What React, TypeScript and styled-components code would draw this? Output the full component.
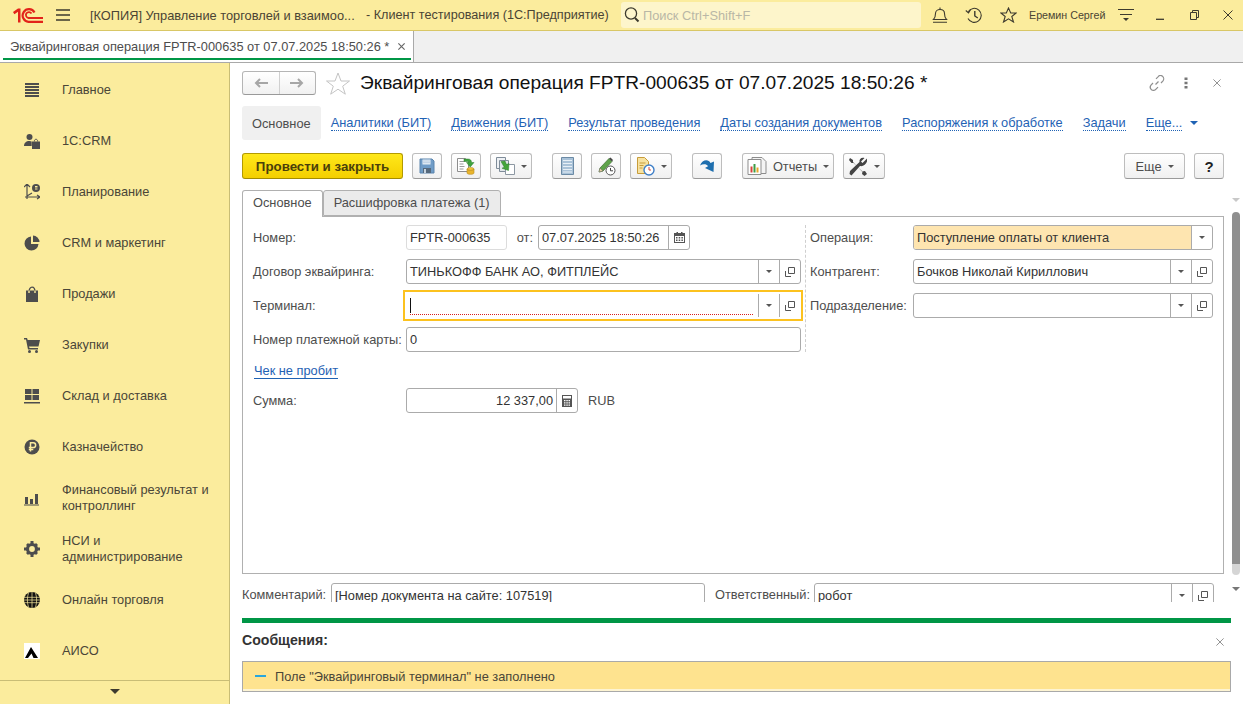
import React from "react";
import styled, { createGlobalStyle } from "styled-components";

const Global = createGlobalStyle`
  html, body { margin: 0; padding: 0; background: #fff; overflow: hidden; }
  body { font-family: "Liberation Sans", Arial, sans-serif; font-size: 12.8px; color: #333; }
  * { box-sizing: border-box; }
  svg { display: block; flex: none; }
`;

const Page = styled.div`
  width: 1243px;
  height: 704px;
  display: flex;
  flex-direction: column;
  overflow: hidden;
`;

/* ---------- top bar ---------- */
const TopBar = styled.header`
  height: 31px;
  flex: none;
  display: flex;
  align-items: center;
  background: #fbec9d;
  border-bottom: 1px solid #d9c766;
  padding-left: 13px;
`;
const WinTitle = styled.span<{ $w: number; $size?: number }>`
  width: ${(p) => p.$w}px;
  flex: none;
  font-size: ${(p) => p.$size ?? 12.8}px;
  color: #4a4434;
  white-space: nowrap;
  overflow: hidden;
`;
const Search = styled.div`
  width: 300px;
  height: 26px;
  flex: none;
  margin-left: 10px;
  background: #fdf5cb;
  border-radius: 3px;
  display: flex;
  align-items: center;
  padding-left: 3px;
  gap: 3px;
  color: #b9b7a6;
`;
const TopIcon = styled.span<{ $w: number }>`
  width: ${(p) => p.$w}px;
  flex: none;
  display: flex;
  justify-content: center;
`;
const UserName = styled.span`
  width: 86px;
  flex: none;
  font-size: 10.7px;
  color: #4a4434;
  white-space: nowrap;
  padding-left: 1px;
`;

/* ---------- open windows strip ---------- */
const Strip = styled.div`
  height: 32px;
  flex: none;
  background: #f0f0f0;
  border-bottom: 1px solid #a9a9a9;
  display: flex;
`;
const StripTab = styled.div`
  width: 414px;
  height: 31px;
  background: #fff;
  border-right: 1px solid #a9a9a9;
  padding: 0 3px 0 10px;
  display: flex;
  align-items: center;
  justify-content: space-between;
  color: #4d4d4d;
  position: relative;
  white-space: nowrap;
`;
const StripUnderline = styled.span`
  position: absolute;
  left: 3px;
  right: 2px;
  bottom: 2px;
  height: 2px;
  background: #009646;
`;
const StripClose = styled.span`
  margin-right: 5px;
  margin-top: -1px;
`;

/* ---------- body ---------- */
const Body = styled.div`
  flex: 1;
  min-height: 0;
  display: flex;
`;
const Sidebar = styled.nav`
  width: 230px;
  flex: none;
  background: #fbec9d;
  border-right: 1px solid #c9bd76;
  display: flex;
  flex-direction: column;
  padding-top: 1px;
`;
const SideList = styled.div`
  height: 616px;
  flex: none;
`;
const SideItem = styled.div`
  height: 51px;
  display: flex;
  align-items: center;
  padding-left: 24px;
  padding-right: 14px;
  gap: 22px;
  color: #4a4638;
  line-height: 16px;
`;
const SideFoot = styled.div`
  flex: 1;
  border-top: 1px solid #c9bd76;
  display: flex;
  justify-content: center;
  padding-top: 8px;
`;
const Main = styled.main`
  flex: 1;
  min-width: 0;
  display: flex;
  flex-direction: column;
  background: #fff;
`;
const FormArea = styled.div`
  height: 555px;
  flex: none;
  position: relative;
  overflow: hidden;
  padding: 8px 19px 0 12px;
`;
const HeadRow = styled.div`
  height: 24px;
  display: flex;
  align-items: center;
`;
const NavPair = styled.div`
  width: 74px;
  height: 24px;
  flex: none;
  display: flex;
  border: 1px solid #b5b5b5;
  border-bottom-color: #999;
  border-radius: 3px;
  background: linear-gradient(#fff, #f1f1f1);
`;
const NavCell = styled.span<{ $line?: boolean }>`
  flex: 1;
  display: flex;
  align-items: center;
  justify-content: center;
  border-left: ${(p) => (p.$line ? "1px solid #d0d0d0" : "none")};
`;
const StarBox = styled.span`
  width: 44px;
  flex: none;
  display: flex;
  justify-content: center;
`;
const Title = styled.h1`
  margin: 0;
  font-size: 19.15px;
  font-weight: 400;
  color: #111;
  white-space: nowrap;
  flex: 1;
`;
const HeadActions = styled.div`
  display: flex;
  align-items: center;
  gap: 19px;
  padding-right: 3px;
`;
const HeadClose = styled.span`
  margin-left: 6px;
`;
const SectionNav = styled.div`
  height: 34px;
  margin-top: 11px;
  display: flex;
  align-items: center;
  gap: 20px;
`;
const SectionCurrent = styled.span`
  height: 34px;
  padding: 0 10px;
  margin-right: -10px;
  display: flex;
  align-items: center;
  background: #f0f0f0;
  border-radius: 3px;
  color: #4d4d4d;
`;
const SectionLink = styled.span`
  color: #1f62b4;
  line-height: 14px;
  border-bottom: 1px dotted #1f62b4;
  white-space: nowrap;
`;
const MoreLink = styled.span`
  display: flex;
  align-items: center;
  gap: 8px;
`;
const CmdBar = styled.div`
  height: 27px;
  margin-top: 13px;
  display: flex;
  gap: 20px;
`;
const CmdGroup = styled.div<{ $end?: boolean }>`
  display: flex;
  gap: 9px;
  margin-left: ${(p) => (p.$end ? "auto" : "0")};
`;
const PrimaryBtn = styled.button`
  width: 161px;
  height: 26px;
  padding: 0;
  border: 1px solid #b39a00;
  border-bottom-color: #a38c00;
  border-radius: 3px;
  background: linear-gradient(#ffe81a, #f4cf00);
  font: bold 13.3px "Liberation Sans", Arial, sans-serif;
  color: #4a3f0a;
`;
const CmdBtn = styled.button<{ $w: number }>`
  width: ${(p) => p.$w}px;
  height: 26px;
  padding: 0;
  border: 1px solid #bdbdbd;
  border-bottom-color: #9a9a9a;
  border-radius: 3px;
  background: linear-gradient(#fff, #f0f0f0);
  display: flex;
  align-items: center;
  justify-content: center;
  gap: 6px;
  font: 12.8px "Liberation Sans", Arial, sans-serif;
  color: #4d4d4d;
`;
const Help = styled.span`
  font-size: 15px;
  font-weight: 700;
  color: #222;
`;
const TabRow = styled.div`
  height: 26px;
  margin-top: 10px;
  display: flex;
  align-items: flex-end;
  position: relative;
  z-index: 1;
`;
const Tab = styled.div<{ $active?: boolean }>`
  height: ${(p) => (p.$active ? "27px" : "26px")};
  margin-bottom: ${(p) => (p.$active ? "-1px" : "0")};
  padding: 0 10px ${(p) => (p.$active ? "3px" : "2px")};
  display: flex;
  align-items: center;
  background: ${(p) => (p.$active ? "#fff" : "#ebebeb")};
  border: 1px solid #b0b0b0;
  border-bottom: ${(p) => (p.$active ? "none" : "1px solid #b0b0b0")};
  border-radius: 3px 3px 0 0;
  color: #4d4d4d;
  white-space: nowrap;
`;
const Panel = styled.section`
  height: 358px;
  border: 1px solid #b0b0b0;
  padding: 8px 10px 0;
`;
const Columns = styled.div`
  display: flex;
`;
const LeftCol = styled.div`
  width: 553px;
  flex: none;
  border-right: 1px dashed #cfcfcf;
  padding-right: 4px;
  display: flex;
  flex-direction: column;
  gap: 9px;
`;
const RightCol = styled.div`
  flex: 1;
  padding-left: 4px;
  display: flex;
  flex-direction: column;
  gap: 9px;
`;
const Row = styled.div`
  height: 25px;
  display: flex;
  align-items: center;
`;
const Label = styled.label<{ $w: number }>`
  width: ${(p) => p.$w}px;
  flex: none;
  color: #4d4d4d;
  white-space: nowrap;
`;
const Field = styled.div<{ $w?: number; $light?: boolean; $focus?: boolean }>`
  ${(p) => (p.$w ? `width: ${p.$w}px; flex: none;` : "flex: 1; min-width: 0;")}
  height: 25px;
  display: flex;
  align-items: stretch;
  background: #fff;
  border: 1px solid ${(p) => (p.$light ? "#dcdcdc" : p.$focus ? "transparent" : "#ababab")};
  border-radius: 3px;
  position: relative;
`;
const FocusRing = styled.span`
  position: absolute;
  inset: -4px -3px -4px -4px;
  border: 2px solid #fcc21f;
  pointer-events: none;
`;
const FieldText = styled.span<{ $bg?: string; $right?: boolean }>`
  flex: 1;
  min-width: 0;
  padding: 0 3px;
  display: flex;
  align-items: center;
  justify-content: ${(p) => (p.$right ? "flex-end" : "flex-start")};
  color: #333;
  white-space: nowrap;
  background: ${(p) => p.$bg ?? "transparent"};
  border-radius: 2px 0 0 2px;
`;
const FieldBtn = styled.span<{ $w?: number }>`
  width: ${(p) => p.$w ?? 21}px;
  flex: none;
  border-left: 1px solid #ababab;
  display: flex;
  align-items: center;
  justify-content: center;
`;
const Caret = styled.span`
  width: 1px;
  height: 15px;
  background: #111;
`;
const RedLine = styled.span`
  position: absolute;
  left: 3px;
  right: 47px;
  bottom: 2px;
  border-bottom: 1px dotted #d8201c;
`;
const Between = styled.span`
  width: 31px;
  flex: none;
  text-align: right;
  padding-right: 5px;
  color: #4d4d4d;
`;
const CheckLink = styled.div`
  height: 18px;
  margin-top: 10px;
  padding-left: 1px;
  display: flex;
  align-items: center;
`;
const SolidLink = styled.span`
  color: #1f62b4;
  line-height: 14px;
  border-bottom: 1px solid #1f62b4;
`;
const SumRow = styled(Row)`
  margin-top: 8px;
`;
const Unit = styled.span`
  margin-left: 10px;
  color: #4d4d4d;
`;
const CutRow = styled.div`
  height: 19px;
  margin-top: 9px;
  display: flex;
  overflow: hidden;
  align-items: flex-start;
`;
const CutLabel = styled.span<{ $w: number; $ml?: number }>`
  width: ${(p) => p.$w}px;
  margin-left: ${(p) => p.$ml ?? 0}px;
  flex: none;
  line-height: 24px;
  color: #4d4d4d;
  white-space: nowrap;
`;
const ScrollTrack = styled.div`
  position: absolute;
  right: 3px;
  top: 135px;
  width: 9px;
  height: 397px;
  display: flex;
  flex-direction: column;
  align-items: center;
`;
const ScrollThumb = styled.div`
  width: 8px;
  height: 363px;
  margin-top: 10px;
  border-radius: 4px;
  background: linear-gradient(#8f8f8f 0 97%, #d5d5d5 97%);
`;
const ScrollArrows = styled.div`
  margin-top: 12px;
`;
const Messages = styled.section`
  flex: 1;
  padding: 0 12px;
  display: flex;
  flex-direction: column;
`;
const GreenBar = styled.div`
  height: 5px;
  flex: none;
  background: #009646;
`;
const MsgHead = styled.div`
  height: 38px;
  flex: none;
  display: flex;
  align-items: center;
  justify-content: space-between;
  padding-right: 7px;
`;
const MsgTitle = styled.h2`
  margin: 0;
  font-size: 14.1px;
  font-weight: 700;
  color: #333;
  position: relative;
  top: -2px;
`;
const MsgBox = styled.div`
  height: 31px;
  flex: none;
  border: 1px solid #a9a9a9;
  background: #fee38f;
  box-shadow: inset 0 -2px 0 #fdf4d3;
  display: flex;
  align-items: center;
  gap: 9px;
  padding-left: 12px;
  color: #4a4638;
  padding-bottom: 1px;
`;
const Dash = styled.span`
  width: 11px;
  height: 2px;
  background: #29a6dd;
`;

/* ---------- drawings ---------- */
const Dark = "#4d4d4d";

const Logo = () => (
  <svg width="30" height="15" viewBox="0 0 30 15" fill="none" stroke="#e2231a">
    <path d="M0 4 5 .5H7.500V14.500H5V3.800L1.400 6.300z" fill="#e2231a" stroke="none" />
    <path d="M21.500 4.500A6.300 6.300 0 1 0 15.500 13.800H30" strokeWidth="2.200" />
    <path d="M18.500 5.500A3 3 0 1 0 15.500 10H30" strokeWidth="1.800" />
  </svg>
);
const Burger = () => (
  <svg width="14" height="12" viewBox="0 0 14 12" stroke="#3d3a2e" strokeWidth="1.300">
    <path d="M0 1h14M0 6h14M0 11h14" />
  </svg>
);
const SearchIcon = () => (
  <svg width="16" height="18" viewBox="0 0 16 18" fill="none" stroke="#3d3a2e" strokeWidth="1.300">
    <circle cx="7" cy="7.500" r="5.600" />
    <path d="M11 12l3.500 3.500" strokeWidth="2" />
  </svg>
);
const Bell = () => (
  <svg width="16" height="17" viewBox="0 0 16 17" fill="none" stroke="#3d3a2e" strokeWidth="1.100">
    <path d="M1.500 12.500c2-2 2-3.500 2-6 0-2.500 2-4 4.500-4s4.500 1.500 4.500 4c0 2.500 0 4 2 6z" />
    <path d="M8 .5v2M1 15.300h14" />
  </svg>
);
const History = () => (
  <svg width="18" height="17" viewBox="0 0 18 17" fill="none" stroke="#3d3a2e" strokeWidth="1.100">
    <path d="M3.200 4.800A7 7 0 1 1 3 11.500" />
    <path d="M.8 3.500 3.500 6 5.500 2.800" />
    <path d="M9.800 4v5l3 2" strokeWidth="1.400" />
  </svg>
);
const TopStar = () => (
  <svg width="17" height="16" viewBox="0 0 17 16" fill="none" stroke="#3d3a2e" strokeWidth="1.100">
    <path d="M8.500 1l2.200 5h5.500l-4.400 3.500 1.700 5.500-5-3.200-5 3.200 1.700-5.500L.8 6h5.500z" />
  </svg>
);
const UserMenu = () => (
  <svg width="16" height="14" viewBox="0 0 16 14" fill="#3d3a2e">
    <path d="M0 1h16v1H0zM2 6h12v1H2z" />
    <path d="M5 10h6l-3 3z" />
  </svg>
);
const Minimize = () => (
  <svg width="10" height="10" viewBox="0 0 10 10" stroke="#3d3a2e" strokeWidth="1.300">
    <path d="M1 9.300h8" />
  </svg>
);
const Restore = () => (
  <svg width="9" height="10" viewBox="0 0 9 10" fill="none" stroke="#3d3a2e">
    <path d="M.5 2.500h6v7h-6zM2.500 2.500v-2h6v7h-2" />
  </svg>
);
const Cross = ({ s = 10, c = "#3d3a2e", w = 1 }: { s?: number; c?: string; w?: number }) => (
  <svg width={s} height={s} viewBox="0 0 10 10" stroke={c} strokeWidth={w}>
    <path d="M.5.500l9 9M9.500.500l-9 9" />
  </svg>
);
const Side = ({ children }: { children: React.ReactNode }) => (
  <svg width="16" height="16" viewBox="0 0 16 16" fill={Dark}>
    {children}
  </svg>
);
const sideIcons: React.ReactNode[] = [
  <Side key="0"><path d="M1 1h14v2H1zM1 4h14v2H1zM1 7h14v2H1zM1 10h14v2H1zM1 13h14v2H1z" /></Side>,
  <Side key="1">
    <circle cx="5.500" cy="4" r="3" />
    <path d="M0 13c0-3 2-5 5.500-5 1 0 1.500.2 2.200.5V13z" />
    <path d="M8 8.500h8V16H8z" />
    <path d="M10.300 8.500c0-3 3.400-3 3.400 0" fill="none" stroke={Dark} />
  </Side>,
  <Side key="2">
    <circle cx="12" cy="4" r="4" />
    <path d="M3 1v14M0 3l3-3 3 3M1 13h15M13 11l3 2-3 2M3 12l5-3" fill="none" stroke={Dark} strokeWidth="1.200" />
    <path d="M11 2h2.500v1.500H11zM11 4.500h2.500V5.500H11z" fill="#fbec9d" />
  </Side>,
  <Side key="3">
    <path d="M7 1.500A7 7 0 1 0 14.500 9H7z" />
    <path d="M9 .5A7 7 0 0 1 15.500 7H9z" />
  </Side>,
  <Side key="4">
    <path d="M2 4.500h12V16H2z" />
    <path d="M5 6c0-6.500 6-6.500 6 0" fill="none" stroke={Dark} strokeWidth="1.300" />
    <path d="M4.300 4.500h1.400V7H4.300zM10.300 4.500h1.400V7h-1.400z" fill="#fbec9d" />
  </Side>,
  <Side key="5">
    <path d="M0 1h3l.7 2H16l-1.500 6.500H5L5.500 11H14v1.500H4L2 2.500H0z" />
    <circle cx="5.500" cy="14.500" r="1.500" />
    <circle cx="12.500" cy="14.500" r="1.500" />
  </Side>,
  <Side key="6">
    <path d="M1 1h6.500v5H1zM8.500 1H15v5H8.500zM1 7h6.500v5H1zM8.500 7H15v5H8.500zM0 14h16v1.500H0z" />
  </Side>,
  <Side key="7">
    <circle cx="8" cy="8" r="7.500" />
    <path d="M6.500 12.500V3.800H9.300a2.300 2.300 0 0 1 0 4.700H4.800M4.800 10.500h4.500" fill="none" stroke="#fbec9d" strokeWidth="1.500" />
  </Side>,
  <Side key="8">
    <path d="M1 7h3v7H1zM6 9h3v5H6zM11 4h3v10h-3zM0 14.500h15V15.500H0z" />
  </Side>,
  <Side key="9">
    <circle cx="8" cy="8" r="4.500" fill="none" stroke={Dark} strokeWidth="3.200" />
    <path d="M6.500 0h3v3h-3zM6.500 13h3v3h-3zM0 6.500h3v3H0zM13 6.500h3v3h-3zM2 4l2-2 2 2-2 2zM10 4l2-2 2 2-2 2zM2 12l2-2 2 2-2 2zM10 12l2-2 2 2-2 2z" />
  </Side>,
  <svg key="10" width="16" height="16" viewBox="0 0 16 16">
    <circle cx="8" cy="8" r="8" fill="#111" />
    <path d="M0 5.300h16M0 8h16M0 10.700h16M8 0v16M4.500 1c-1.500 4-1.500 10 0 14M11.500 1c1.500 4 1.500 10 0 14" stroke="#fbec9d" strokeWidth=".7" fill="none" />
  </svg>,
  <svg key="11" width="16" height="16" viewBox="0 0 16 16">
    <path d="M0 0h16v16H0z" fill="#fff" />
    <path d="M7 4l7 11H9.500L7.500 10.500 4 15H1z" fill="#000" />
  </svg>,
];
const SideDown = () => (
  <svg width="10" height="5" viewBox="0 0 10 5" fill="#3d3a2e">
    <path d="M0 0h10L5 5z" />
  </svg>
);
const Arrow = ({ dir }: { dir: "l" | "r" }) => (
  <svg width="14" height="10" viewBox="0 0 14 10" fill="none" stroke="#a6a6a6" strokeWidth="2" style={dir === "r" ? { transform: "scaleX(-1)" } : undefined}>
    <path d="M14 5H2M6 1 2 5l4 4" />
  </svg>
);
const BigStar = () => (
  <svg width="24" height="23" viewBox="0 0 24 23" fill="#fff" stroke="#c4c4c4">
    <path d="M12 1l3 8h8.500l-6.800 5.200 2.600 8L12 17.200 4.700 22.200l2.600-8L.5 9H9z" />
  </svg>
);
const LinkIcon = () => (
  <svg width="16" height="16" viewBox="0 0 16 16" fill="none" stroke="#8f8f8f" strokeWidth="1.200">
    <path d="M6.500 9.500 9.500 6.500M7 3.800l2-2a3 3 0 0 1 5 4L12 8M9 12.200l-2 2a3 3 0 0 1-5-4L4 8" />
  </svg>
);
const Dots = () => (
  <svg width="4" height="12" viewBox="0 0 4 12" fill="#777">
    <path d="M.5.500h3v2.500h-3zM.5 4.800h3v2.500h-3zM.5 9h3v2.500h-3z" />
  </svg>
);
const Tri = ({ c = "#555", w = 6 }: { c?: string; w?: number }) => (
  <svg width={w} height={w / 2} viewBox="0 0 6 3" fill={c}>
    <path d="M0 0h6L3 3z" />
  </svg>
);
const Save = () => (
  <svg width="16" height="16" viewBox="0 0 16 16">
    <path d="M1 1h12l2 2v12H1z" fill="#6f9cc7" stroke="#5a84ad" />
    <path d="M3.500 1.500h8v5h-8z" fill="#e6eef6" />
    <path d="M3.500 3h8M3.500 4.700h8" stroke="#b9cde0" />
    <path d="M4 10h8v5H4z" fill="#56697c" />
    <path d="M5 11h2v4H5z" fill="#c7d4df" />
  </svg>
);
const PostDoc = () => (
  <svg width="20" height="18" viewBox="0 0 20 18">
    <path d="M1.500 1.500h8l3 3v10h-11z" fill="#fff" stroke="#8d8d8d" />
    <path d="M3.500 4.500h5M3.500 7h4M3.500 9.500h5M3.500 12h4" stroke="#9a9a9a" />
    <path d="M8 2h4c2.500 0 3.500 1.500 3.500 3.500H18l-3.800 4.500-3.700-4.500h2.200c0-.7-.4-1-1.200-1H8z" fill="#3fa33c" stroke="#2c7d2c" strokeWidth=".5" />
    <ellipse cx="14.500" cy="12" rx="3.500" ry="1.500" fill="#f0c33c" stroke="#b98a1e" strokeWidth=".6" />
    <path d="M11 12v4c0 1.800 7 1.800 7 0v-4c0 1.800-7 1.800-7 0z" fill="#e9b52d" stroke="#b98a1e" strokeWidth=".6" />
  </svg>
);
const Copies = () => (
  <svg width="19" height="18" viewBox="0 0 19 18">
    <path d="M.5.500h9v11h-9z" fill="#eef1f4" stroke="#7f8c99" />
    <path d="M3.500 3.500h9v11h-9z" fill="#e3e7eb" stroke="#7f8c99" />
    <path d="M9.500 7.500h9v10h-9z" fill="#fff" stroke="#8d98a3" />
    <path d="M5 4.500 9 4l1.500 3.500 2.500-1-.5 7-6.500-2.300 2.300-1z" fill="#43a53a" stroke="#2c7d2c" strokeWidth=".5" />
  </svg>
);
const ListDoc = () => (
  <svg width="13" height="18" viewBox="0 0 13 18">
    <path d="M.5.500h12v17H.5z" fill="#a9c2d8" stroke="#6b8aa5" />
    <path d="M2 3.500h9M2 6.500h9M2 9.500h9M2 12.500h9M2 15h9" stroke="#e7eff6" />
  </svg>
);
const PencilClock = () => (
  <svg width="19" height="19" viewBox="0 0 19 19">
    <path d="M3 11 12 1.500l3 3L6 14l-4 1z" fill="#5fa34a" stroke="#3d6b30" strokeWidth=".7" />
    <path d="M12 1.500l3 3 1-1.500-2.500-2.500z" fill="#444" />
    <path d="M2 15l1-4 3 3z" fill="#e7cfa4" stroke="#555" strokeWidth=".4" />
    <circle cx="13.500" cy="13.500" r="4.500" fill="#fff" stroke="#555" />
    <path d="M13.500 11v2.800h2.500" stroke="#444" fill="none" />
  </svg>
);
const DocClock = () => (
  <svg width="19" height="19" viewBox="0 0 19 19">
    <path d="M1.500.500h7l4 4v12h-11z" fill="#f7e2a0" stroke="#c79c3a" />
    <path d="M3.500 6h6M3.500 8.500h4M3.500 11h3" stroke="#c79c3a" />
    <circle cx="13" cy="13" r="5" fill="#fff" stroke="#3f7fc7" strokeWidth="1.400" />
    <path d="M13 10v3h2" stroke="#d6463c" fill="none" />
  </svg>
);
const BlueArrow = () => (
  <svg width="16" height="14" viewBox="0 0 16 14">
    <path d="M1 6.500C3 .5 9.500-.5 11.500 4L15 2.500l-.5 10.500-8.500-4 3-1.800C7.500 4.800 4 4.800 1 6.500z" fill="#1f6fae" />
  </svg>
);
const ReportIcon = () => (
  <svg width="20" height="18" viewBox="0 0 20 18">
    <path d="M5 .5h10l4 4v12H5z" fill="#f4f4f4" stroke="#8d8d8d" />
    <path d="M1 2.500h13v15H1z" fill="#fff" stroke="#8d8d8d" />
    <path d="M3.500 9.500h2v6h-2z" fill="#d8433a" />
    <path d="M6.500 7h2v8.500h-2z" fill="#3d9c45" />
    <path d="M9.500 10.500h2v5h-2z" fill="#e6a72a" />
  </svg>
);
const Tools = () => (
  <svg width="20" height="19" viewBox="0 0 20 19" fill="#444">
    <path d="M2 1 5 3v2l9 9.500 3-.5 2 3-2.500 2-2.500-2 .5-2.500L5.500 6 3.500 6 1 3z" />
    <path d="M19 1.500 14.500 6 13 4.500 16.500 1c-3-1-5.500 1-5 4L2 14l-.5 3 2 1.500L12 9c3 .7 6-1.500 7-4.500z" />
  </svg>
);
const Popout = () => (
  <svg width="10" height="10" viewBox="0 0 10 10" fill="none" stroke="#555">
    <path d="M3.500.5h6v6h-6zM.5 4v5.500H6" />
  </svg>
);
const Calendar = () => (
  <svg width="11" height="11" viewBox="0 0 11 11" fill="#555">
    <path d="M0 1h11v10H0zM1 4v6h9V4z" fillRule="evenodd" />
    <path d="M2.500 0H4v2H2.500zM7 0h1.500v2H7zM2 5h1.500v1.500H2zM4.700 5h1.500v1.500H4.700zM7.400 5h1.500v1.500H7.400zM2 7.500h1.500V9H2zM4.700 7.500h1.500V9H4.700zM7.400 7.500h1.500V9H7.400z" />
  </svg>
);
const Calc = () => (
  <svg width="10" height="12" viewBox="0 0 10 12" fill="#555">
    <path d="M0 0h10v12H0zM1 1v2.500h8V1z" fillRule="evenodd" />
    <path d="M2 5h1.500v1.300H2zM4.300 5h1.500v1.300H4.300zM6.500 5H8v1.300H6.500zM2 7.300h1.500v1.300H2zM4.300 7.300h1.500v1.300H4.300zM6.500 7.300H8v1.300H6.500zM2 9.500h1.500v1.300H2zM4.300 9.500h1.500v1.300H4.300zM6.500 9.500H8v1.300H6.500z" fill="#fff" />
  </svg>
);

const sideLabels = [
  "Главное", "1С:CRM", "Планирование", "CRM и маркетинг", "Продажи", "Закупки",
  "Склад и доставка", "Казначейство", "Финансовый результат и контроллинг",
  "НСИ и администрирование", "Онлайн торговля", "АИСО",
];
const sectionLinks = [
  "Аналитики (БИТ)", "Движения (БИТ)", "Результат проведения",
  "Даты создания документов", "Распоряжения к обработке", "Задачи",
];

const LookupButtons = ({ open = true }: { open?: boolean }) => (
  <>
    <FieldBtn><Tri w={6} /></FieldBtn>
    {open && <FieldBtn><Popout /></FieldBtn>}
  </>
);

export default function App() {
  return (
    <Page>
      <Global />
      <TopBar>
        <Logo />
        <TopIcon $w={14} style={{ marginLeft: 13 }}><Burger /></TopIcon>
        <WinTitle $w={276} style={{ marginLeft: 20 }}>[КОПИЯ] Управление торговлей и взаимоо...</WinTitle>
        <WinTitle $w={245} $size={12.65}>- Клиент тестирования (1С:Предприятие)</WinTitle>
        <Search><SearchIcon />Поиск Ctrl+Shift+F</Search>
        <TopIcon $w={38}><Bell /></TopIcon>
        <TopIcon $w={30}><History /></TopIcon>
        <TopIcon $w={38}><TopStar /></TopIcon>
        <UserName style={{ marginLeft: 1 }}>Еремин Сергей</UserName>
        <TopIcon $w={24}><UserMenu /></TopIcon>
        <TopIcon $w={44}><Minimize /></TopIcon>
        <TopIcon $w={24}><Restore /></TopIcon>
        <TopIcon $w={10} style={{ marginLeft: 17 }}><Cross s={10} /></TopIcon>
      </TopBar>
      <Strip>
        <StripTab>
          Эквайринговая операция FPTR-000635 от 07.07.2025 18:50:26 *
          <StripClose><Cross s={7} c="#666" w={1.600} /></StripClose>
          <StripUnderline />
        </StripTab>
      </Strip>
      <Body>
        <Sidebar>
          <SideList>
            {sideLabels.map((l, i) => (
              <SideItem key={l}>
                {sideIcons[i]}
                <span>{l}</span>
              </SideItem>
            ))}
          </SideList>
          <SideFoot><SideDown /></SideFoot>
        </Sidebar>
        <Main>
          <FormArea>
            <HeadRow>
              <NavPair>
                <NavCell><Arrow dir="l" /></NavCell>
                <NavCell $line><Arrow dir="r" /></NavCell>
              </NavPair>
              <StarBox><BigStar /></StarBox>
              <Title>Эквайринговая операция FPTR-000635 от 07.07.2025 18:50:26 *</Title>
              <HeadActions>
                <LinkIcon />
                <Dots />
                <HeadClose><Cross s={8} c="#777" /></HeadClose>
              </HeadActions>
            </HeadRow>
            <SectionNav>
              <SectionCurrent>Основное</SectionCurrent>
              {sectionLinks.map((s) => <SectionLink key={s}>{s}</SectionLink>)}
              <MoreLink>
                <SectionLink>Еще...</SectionLink>
                <Tri c="#1f62b4" w={8} />
              </MoreLink>
            </SectionNav>
            <CmdBar>
              <CmdGroup>
                <PrimaryBtn>Провести и закрыть</PrimaryBtn>
                <CmdBtn $w={30}><Save /></CmdBtn>
                <CmdBtn $w={30}><PostDoc /></CmdBtn>
                <CmdBtn $w={42}><Copies /><Tri /></CmdBtn>
              </CmdGroup>
              <CmdGroup>
                <CmdBtn $w={30}><ListDoc /></CmdBtn>
                <CmdBtn $w={30}><PencilClock /></CmdBtn>
                <CmdBtn $w={42}><DocClock /><Tri /></CmdBtn>
              </CmdGroup>
              <CmdBtn $w={30}><BlueArrow /></CmdBtn>
              <CmdGroup>
                <CmdBtn $w={92}><ReportIcon />Отчеты<Tri /></CmdBtn>
                <CmdBtn $w={42}><Tools /><Tri /></CmdBtn>
              </CmdGroup>
              <CmdGroup $end>
                <CmdBtn $w={61}>Еще<Tri /></CmdBtn>
                <CmdBtn $w={30}><Help>?</Help></CmdBtn>
              </CmdGroup>
            </CmdBar>
            <TabRow>
              <Tab $active>Основное</Tab>
              <Tab>Расшифровка платежа (1)</Tab>
            </TabRow>
            <Panel>
              <Columns>
                <LeftCol>
                  <Row>
                    <Label $w={153}>Номер:</Label>
                    <Field $w={101} $light><FieldText>FPTR-000635</FieldText></Field>
                    <Between>от:</Between>
                    <Field $w={152}>
                      <FieldText>07.07.2025 18:50:26</FieldText>
                      <FieldBtn><Calendar /></FieldBtn>
                    </Field>
                  </Row>
                  <Row>
                    <Label $w={153}>Договор эквайринга:</Label>
                    <Field>
                      <FieldText>ТИНЬКОФФ БАНК АО, ФИТПЛЕЙС</FieldText>
                      <LookupButtons />
                    </Field>
                  </Row>
                  <Row>
                    <Label $w={153}>Терминал:</Label>
                    <Field $focus>
                      <FieldText><Caret /></FieldText>
                      <RedLine />
                      <LookupButtons />
                      <FocusRing />
                    </Field>
                  </Row>
                  <Row>
                    <Label $w={153}>Номер платежной карты:</Label>
                    <Field><FieldText>0</FieldText></Field>
                  </Row>
                </LeftCol>
                <RightCol>
                  <Row>
                    <Label $w={103}>Операция:</Label>
                    <Field>
                      <FieldText $bg="#fee5b0">Поступление оплаты от клиента</FieldText>
                      <LookupButtons open={false} />
                    </Field>
                  </Row>
                  <Row>
                    <Label $w={103}>Контрагент:</Label>
                    <Field>
                      <FieldText>Бочков Николай Кириллович</FieldText>
                      <LookupButtons />
                    </Field>
                  </Row>
                  <Row>
                    <Label $w={103}>Подразделение:</Label>
                    <Field>
                      <FieldText />
                      <LookupButtons />
                    </Field>
                  </Row>
                </RightCol>
              </Columns>
              <CheckLink><SolidLink>Чек не пробит</SolidLink></CheckLink>
              <SumRow>
                <Label $w={153}>Сумма:</Label>
                <Field $w={172}>
                  <FieldText $right>12 337,00</FieldText>
                  <FieldBtn><Calc /></FieldBtn>
                </Field>
                <Unit>RUB</Unit>
              </SumRow>
            </Panel>
            <CutRow>
              <CutLabel $w={89}>Комментарий:</CutLabel>
              <Field $w={374}><FieldText>[Номер документа на сайте: 107519]</FieldText></Field>
              <CutLabel $w={99} $ml={10}>Ответственный:</CutLabel>
              <Field $w={400} style={{ marginRight: -10 }}>
                <FieldText>робот</FieldText>
                <LookupButtons />
              </Field>
            </CutRow>
            <ScrollTrack>
              <Tri c="#c8c8c8" w={8} />
              <ScrollThumb />
              <ScrollArrows><Tri c="#777" w={8} /></ScrollArrows>
            </ScrollTrack>
          </FormArea>
          <Messages>
            <GreenBar />
            <MsgHead>
              <MsgTitle>Сообщения:</MsgTitle>
              <Cross s={8} c="#777" />
            </MsgHead>
            <MsgBox><Dash />Поле "Эквайринговый терминал" не заполнено</MsgBox>
          </Messages>
        </Main>
      </Body>
    </Page>
  );
}
